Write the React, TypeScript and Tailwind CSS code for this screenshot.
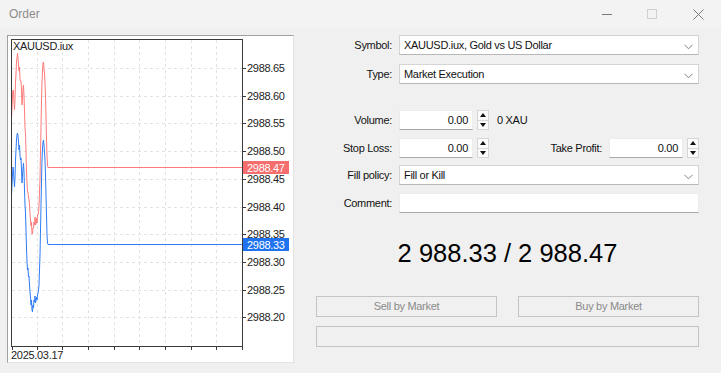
import React from "react";

const blue: [number, number][] = [
  [11.5, 195], [12, 185], [12.5, 175], [13, 167], [13.5, 172], [14, 180], [14.5, 187], [15, 178],
  [15.5, 160], [16, 150], [16.5, 140], [17, 135], [17.5, 133], [18, 136], [18.5, 142], [19, 150],
  [19.5, 145], [20, 155], [20.5, 160], [21, 158], [21.5, 170], [22, 183], [22.5, 175], [23, 168],
  [23.5, 163], [24, 172], [24.5, 190], [25, 205], [25.5, 213], [26, 230], [26.5, 248], [27, 262],
  [27.5, 270], [28, 268], [28.5, 277], [29, 276], [29.5, 285], [30, 292], [30.5, 297], [31, 305],
  [31.5, 300], [32, 310], [32.5, 312], [33, 305], [33.5, 308], [34, 300], [34.5, 302], [35, 296],
  [35.5, 303], [36, 300], [36.5, 297], [37, 300], [37.5, 295], [38, 293], [38.5, 290], [39, 285],
  [39.5, 270], [40, 255], [40.5, 230], [41, 205], [41.5, 180], [42, 160], [42.5, 148], [43, 142],
  [43.5, 140], [44, 145], [44.5, 152], [45, 160], [45.5, 175], [46, 195], [46.5, 215], [47, 235],
  [47.5, 243], [48, 244.5], [242, 244.5],
];
const red: [number, number][] = blue.map(([x, y], i) => {
  if (x >= 48) return [x, 167.5];
  const j = [0, 2, -1, 1, -2, 0, 1, -1][i % 8];
  return [x, y - 78 + j];
});
const toPts = (a: [number, number][]) => a.map(([x, y]) => `${x},${y}`).join(" ");

const prices = ["2988.65", "2988.60", "2988.55", "2988.50", "2988.45", "2988.40", "2988.35", "2988.30", "2988.25", "2988.20"];
const priceY = (i: number) => 68 + i * 27.7;
const vgrid = [37, 62, 88, 114, 139, 165, 191, 216];

function Chart() {
  return (
    <div className="w-[287px] h-[328px] border border-t-[#a0a0a0] border-l-[#a0a0a0] border-r-[#e3e3e3] border-b-[#e3e3e3] bg-white">
      <svg width="285" height="326" viewBox="8 36 285 326" style={{ fontFamily: "'Liberation Sans', Arial, sans-serif" }}>
        {prices.map((p, i) => (
          <line key={"h" + p} x1="12" x2="242" y1={Math.round(priceY(i)) + 0.5} y2={Math.round(priceY(i)) + 0.5} stroke="#e2e2e2" strokeDasharray="3 3" shapeRendering="crispEdges" />
        ))}
        {vgrid.map((x) => (
          <line key={"v" + x} x1={x + 0.5} x2={x + 0.5} y1="40" y2="346" stroke="#e2e2e2" strokeDasharray="3 3" shapeRendering="crispEdges" />
        ))}
        <polyline points={toPts(red)} fill="none" stroke="#ff7b7b" strokeWidth="1" />
        <polyline points={toPts(blue)} fill="none" stroke="#2f7cf6" strokeWidth="1" />
        <rect x="11.5" y="39.5" width="231" height="307" fill="none" stroke="#3a3a3a" shapeRendering="crispEdges" />
        {[12, ...vgrid, 242].map((x) => (
          <line key={"t" + x} x1={x + 0.5} x2={x + 0.5} y1="347" y2="350" stroke="#3a3a3a" shapeRendering="crispEdges" />
        ))}
        {prices.map((p, i) => (
          <line key={"rt" + p} x1="243" x2="246" y1={Math.round(priceY(i)) + 0.5} y2={Math.round(priceY(i)) + 0.5} stroke="#3a3a3a" shapeRendering="crispEdges" />
        ))}
        {prices.map((p, i) => (
          <text key={"l" + p} x="247" y={priceY(i) + 4} fontSize="11" fill="#222">{p}</text>
        ))}
        <rect x="243" y="161" width="46" height="13" fill="#f56d6d" />
        <text x="247" y="171.5" fontSize="11" fill="#ffffff">2988.47</text>
        <rect x="243" y="238" width="46" height="13" fill="#1f72f0" />
        <text x="247" y="248.5" fontSize="11" fill="#ffffff">2988.33</text>
        <text x="13" y="50" fontSize="11" fill="#222">XAUUSD.iux</text>
        <text x="11" y="359" fontSize="11" fill="#222">2025.03.17</text>
      </svg>
    </div>
  );
}

function Chevron() {
  return (
    <svg width="9" height="6" viewBox="0 0 9 6" className="absolute right-[5px] top-[8px]">
      <polyline points="0.5,0.8 4.5,4.8 8.5,0.8" fill="none" stroke="#808080" strokeWidth="1" />
    </svg>
  );
}

function Select({ value }: { value: string }) {
  return (
    <div className="relative flex-1 h-[20px] bg-white border border-[#d4d4d4] border-b-[#b8b8b8] flex items-center pl-[4px]">
      <span>{value}</span>
      <Chevron />
    </div>
  );
}

function Spin() {
  return (
    <div className="w-[12px] h-[20px] flex flex-col border border-[#d6d6d6] bg-[#fbfbfb]">
      <div className="flex-1 flex items-center justify-center border-b border-[#d6d6d6]">
        <svg width="6" height="4" viewBox="0 0 6 4"><polygon points="0,4 3,0 6,4" fill="#111" /></svg>
      </div>
      <div className="flex-1 flex items-center justify-center">
        <svg width="6" height="4" viewBox="0 0 6 4"><polygon points="0,0 6,0 3,4" fill="#111" /></svg>
      </div>
    </div>
  );
}

function NumInput() {
  return (
    <div className="w-[74px] h-[20px] bg-white border border-[#ececec] border-b-[#a8a8a8] flex items-center justify-end pr-[4px]">
      0.00
    </div>
  );
}

function Label({ children }: { children: React.ReactNode }) {
  return <div className="w-[92px] shrink-0 text-right pr-0 mr-[7px]">{children}</div>;
}

export default function App() {
  return (
    <div className="w-[721px] h-[373px] bg-[#f0f0f0] flex flex-col text-[11px] tracking-[-0.3px] text-[#111] font-['Liberation_Sans',Arial,sans-serif] overflow-hidden">
      <div className="h-[28px] bg-[#f3f3f3] flex items-center shrink-0 relative">
        <span className="pl-[9px] text-[12px] tracking-normal text-[#8c8c8c]">Order</span>
        <div className="ml-auto flex items-center h-full">
          <div className="w-[46px] h-full flex items-center justify-center">
            <div className="w-[10px] h-px bg-[#7a7a7a]" />
          </div>
          <div className="w-[46px] h-full flex items-center justify-center ml-[-1px]">
            <div className="w-[10px] h-[10px] border border-[#cfcfcf]" />
          </div>
          <div className="w-[46px] h-full flex items-center justify-center mr-[0px]">
            <svg width="11" height="11" viewBox="0 0 11 11">
              <path d="M0.5 0.5 L10.5 10.5 M10.5 0.5 L0.5 10.5" stroke="#7a7a7a" strokeWidth="1" fill="none" />
            </svg>
          </div>
        </div>
      </div>
      <div className="flex flex-1 pt-[7px] pl-[7px]">
        <Chart />
        <div className="flex flex-col ml-[6px] w-[399px]">
          <div className="flex items-center h-[20px]">
            <Label>Symbol:</Label>
            <Select value="XAUUSD.iux, Gold vs US Dollar" />
          </div>
          <div className="flex items-center h-[20px] mt-[9px]">
            <Label>Type:</Label>
            <Select value="Market Execution" />
          </div>
          <div className="flex items-center h-[20px] mt-[26px]">
            <Label>Volume:</Label>
            <NumInput />
            <div className="ml-[4px]"><Spin /></div>
            <span className="ml-[8px]">0 XAU</span>
          </div>
          <div className="flex items-center h-[20px] mt-[8px]">
            <Label>Stop Loss:</Label>
            <NumInput />
            <div className="ml-[4px]"><Spin /></div>
            <div className="flex-1 text-right mr-[7px]">Take Profit:</div>
            <NumInput />
            <div className="ml-[4px]"><Spin /></div>
          </div>
          <div className="flex items-center h-[20px] mt-[7px]">
            <Label>Fill policy:</Label>
            <Select value="Fill or Kill" />
          </div>
          <div className="flex items-center h-[20px] mt-[8px]">
            <Label>Comment:</Label>
            <div className="flex-1 h-[20px] bg-white border border-[#ececec] border-b-[#a8a8a8]" />
          </div>
          <div className="pl-[16px] flex flex-col">
            <div className="h-[30px] mt-[25px] flex items-center justify-center text-[25.5px] tracking-normal text-black">
              2 988.33 / 2 988.47
            </div>
            <div className="flex mt-[28px] gap-[21px]">
              <div className="flex-1 h-[21px] border border-[#c4c4c4] bg-[#f0f0f0] flex items-center justify-center text-[#8a8a8a]">Sell by Market</div>
              <div className="flex-1 h-[21px] border border-[#c4c4c4] bg-[#f0f0f0] flex items-center justify-center text-[#8a8a8a]">Buy by Market</div>
            </div>
            <div className="h-[21px] mt-[9px] border border-[#c4c4c4] bg-[#f0f0f0]" />
          </div>
        </div>
      </div>
    </div>
  );
}
